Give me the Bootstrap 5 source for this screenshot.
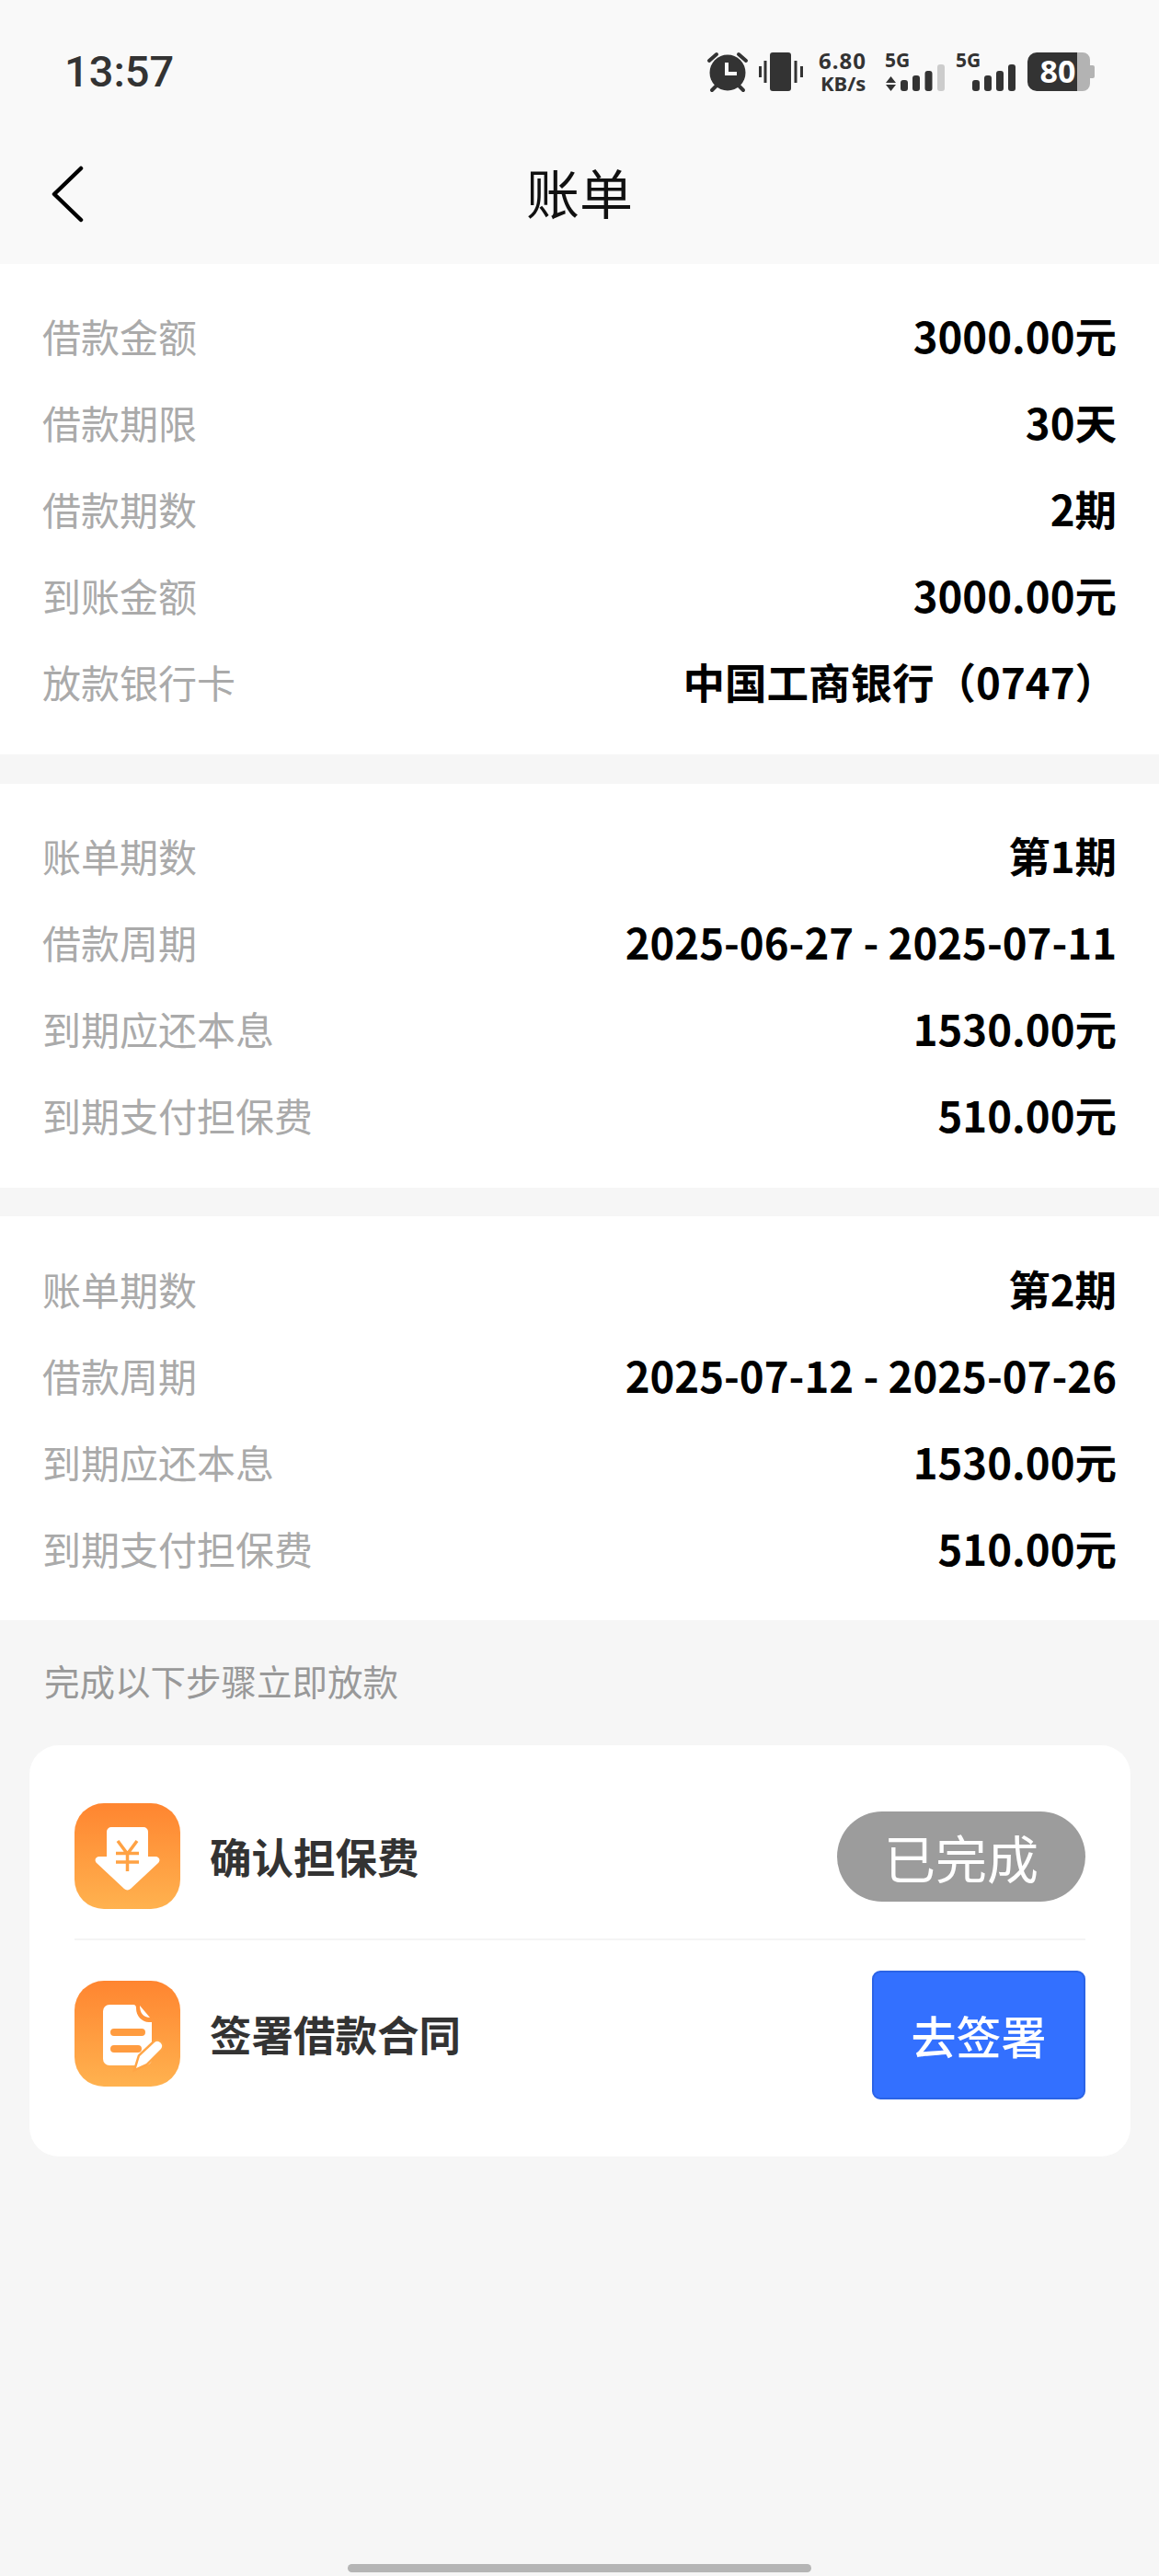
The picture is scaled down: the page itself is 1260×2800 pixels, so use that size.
<!DOCTYPE html>
<html lang="zh-CN">
<head>
    <meta charset="UTF-8">
    <meta name="viewport" content="width=device-width, initial-scale=1.0">
    <title>账单</title>
    <link rel="stylesheet" href="https://cdn.jsdelivr.net/npm/bootstrap@5.3.0/dist/css/bootstrap.min.css">
    <style>
        body {
            font-family: "Noto Sans CJK SC", "Noto Sans", sans-serif;
            background-color: #f6f6f6;
            min-height: 2800px;
            position: relative;
        }
        .top-area {
            background-color: #f9f9f9;
            height: 287px;
        }
        .status-bar {
            height: 150px;
            padding: 47px 60px 0 70px;
        }
        .clock {
            font-family: Roboto, "Noto Sans", sans-serif;
            font-size: 47px;
            font-weight: 500;
            line-height: 62px;
            color: #333;
        }
        .status-icons {
            margin-top: 3px;
        }
        .status-icons text {
            font-family: "Noto Sans", sans-serif;
            fill: #333;
            font-weight: 700;
        }
        .status-icons .net-top {
            font-size: 24px;
            letter-spacing: 1px;
        }
        .status-icons .net-low {
            font-size: 22px;
        }
        .status-icons .net-5g {
            font-size: 21px;
        }
        .status-icons .batt-num {
            font-size: 34px;
            fill: #fff;
        }
        .title-bar {
            height: 137px;
            padding: 0 55px;
        }
        .back-arrow {
            margin-bottom: 15px;
        }
        .page-title {
            font-size: 58px;
            line-height: 76px;
            color: #111;
            top: 20px;
            left: 0;
        }
        .bill-section {
            background-color: #fff;
            padding: 30px 46px 33px 46px;
            margin-bottom: 31px;
        }
        .bill-section.first-section {
            margin-bottom: 32px;
        }
        .bill-section.last-section {
            padding-top: 31px;
            padding-bottom: 32px;
            margin-bottom: 0;
        }
        .bill-row {
            height: 94px;
        }
        .bill-label {
            font-size: 42px;
            color: #aaa;
        }
        .bill-value {
            font-size: 45.500px;
            font-weight: 700;
            color: #000;
        }
        .steps-hint {
            font-size: 38.500px;
            line-height: 50px;
            color: #999;
            padding: 40px 0 0 48px;
        }
        .steps-card {
            background-color: #fff;
            border-radius: 32px;
            margin: 46px 31px 0 32px;
            height: 447px;
            padding: 63px 49px 0 49px;
        }
        .step-row {
            height: 115px;
        }
        .step-icon {
            width: 115px;
            height: 115px;
            border-radius: 32px;
            background: linear-gradient(180deg, #ff8530, #ffb24f);
        }
        .step-name {
            font-size: 45.500px;
            font-weight: 700;
            color: #333;
            margin-left: 32px;
        }
        .step-divider {
            height: 2px;
            background-color: #f4f4f4;
            margin: 32px 0 44px 0;
        }
        .done-pill {
            width: 270px;
            height: 98px;
            background-color: #9c9c9c;
            color: #fff;
            font-size: 56px;
            border-radius: 49px;
        }
        .sign-btn {
            width: 232px;
            height: 140px;
            background-color: #3370ff;
            border: 2px solid #2b63e6;
            color: #fff;
            font-size: 49px;
            font-weight: 500;
            border-radius: 9px;
            margin: -11px 0 -13px 0;
        }
        .sign-btn:hover {
            background-color: #3370ff;
            color: #fff;
        }
        .home-bar {
            width: 504px;
            height: 9px;
            background-color: #b5b5b5;
            border-radius: 5px;
            bottom: 4px;
            left: 378px;
        }
    </style>
</head>
<body>

    <div class="top-area">
        <!-- status bar -->
        <div class="status-bar d-flex justify-content-between align-items-start">
            <div class="clock">13:57</div>
            <svg class="status-icons" width="440" height="56" viewBox="760 50 440 56">
                <!-- alarm -->
                <circle cx="791" cy="79" r="19.500" fill="#333"/>
                <path d="M771 66l8-7M811 66l-8-7M774 98l5-5M808 98l-5-5" stroke="#333" stroke-width="4" stroke-linecap="round"/>
                <path d="M790 68v12h11" fill="none" stroke="#f9f9f9" stroke-width="4"/>
                <!-- vibrate -->
                <rect x="837" y="57" width="23" height="42" rx="3" fill="#333"/>
                <path d="M826.500 72v12M832 66v24M865 66v24M871.500 72v12" stroke="#333" stroke-width="3"/>
                <!-- speed -->
                <text x="890" y="75" class="net-top">6.80</text>
                <text x="892" y="99" class="net-low">KB/s</text>
                <!-- sim 1 -->
                <text x="962" y="73" class="net-5g">5G</text>
                <path d="M963 90l5.500-7 5.500 7zM963 92l5.500 7 5.500-7z" fill="#333"/>
                <rect x="979" y="87" width="8" height="12" rx="3" fill="#333"/>
                <rect x="992" y="82" width="8" height="17" rx="3" fill="#333"/>
                <rect x="1005.500" y="77" width="8" height="22" rx="3" fill="#333"/>
                <rect x="1019" y="70" width="8" height="29" rx="3" fill="#ccc"/>
                <!-- sim 2 -->
                <text x="1039" y="73" class="net-5g">5G</text>
                <rect x="1057" y="87" width="8" height="12" rx="3" fill="#333"/>
                <rect x="1070" y="82" width="8" height="17" rx="3" fill="#333"/>
                <rect x="1083" y="77" width="8" height="22" rx="3" fill="#333"/>
                <rect x="1096" y="70" width="8" height="29" rx="3" fill="#333"/>
                <!-- battery -->
                <path d="M1171 57h-44a10 10 0 0 0-10 10v22a10 10 0 0 0 10 10h44z" fill="#333"/>
                <path d="M1171 57h6a8 8 0 0 1 8 8v6h3a2 2 0 0 1 2 2v10a2 2 0 0 1-2 2h-3v6a8 8 0 0 1-8 8h-6z" fill="#b3b3b3"/>
                <text x="1150" y="90" class="batt-num" text-anchor="middle">80</text>
            </svg>
        </div>
        <!-- title -->
        <div class="title-bar position-relative d-flex align-items-center">
            <svg class="back-arrow" width="38" height="62" viewBox="0 0 38 62">
                <path d="M33 3L4 31l29 28" fill="none" stroke="#000" stroke-width="4.500" stroke-linecap="round" stroke-linejoin="round"/>
            </svg>
            <div class="page-title position-absolute w-100 text-center">账单</div>
        </div>
    </div>

    <div class="bill-section first-section">
        <div class="bill-row d-flex justify-content-between align-items-center">
            <span class="bill-label">借款金额</span><span class="bill-value">3000.00元</span>
        </div>
        <div class="bill-row d-flex justify-content-between align-items-center">
            <span class="bill-label">借款期限</span><span class="bill-value">30天</span>
        </div>
        <div class="bill-row d-flex justify-content-between align-items-center">
            <span class="bill-label">借款期数</span><span class="bill-value">2期</span>
        </div>
        <div class="bill-row d-flex justify-content-between align-items-center">
            <span class="bill-label">到账金额</span><span class="bill-value">3000.00元</span>
        </div>
        <div class="bill-row d-flex justify-content-between align-items-center">
            <span class="bill-label">放款银行卡</span><span class="bill-value">中国工商银行（0747）</span>
        </div>
    </div>

    <div class="bill-section">
        <div class="bill-row d-flex justify-content-between align-items-center">
            <span class="bill-label">账单期数</span><span class="bill-value">第1期</span>
        </div>
        <div class="bill-row d-flex justify-content-between align-items-center">
            <span class="bill-label">借款周期</span><span class="bill-value">2025-06-27 - 2025-07-11</span>
        </div>
        <div class="bill-row d-flex justify-content-between align-items-center">
            <span class="bill-label">到期应还本息</span><span class="bill-value">1530.00元</span>
        </div>
        <div class="bill-row d-flex justify-content-between align-items-center">
            <span class="bill-label">到期支付担保费</span><span class="bill-value">510.00元</span>
        </div>
    </div>

    <div class="bill-section last-section">
        <div class="bill-row d-flex justify-content-between align-items-center">
            <span class="bill-label">账单期数</span><span class="bill-value">第2期</span>
        </div>
        <div class="bill-row d-flex justify-content-between align-items-center">
            <span class="bill-label">借款周期</span><span class="bill-value">2025-07-12 - 2025-07-26</span>
        </div>
        <div class="bill-row d-flex justify-content-between align-items-center">
            <span class="bill-label">到期应还本息</span><span class="bill-value">1530.00元</span>
        </div>
        <div class="bill-row d-flex justify-content-between align-items-center">
            <span class="bill-label">到期支付担保费</span><span class="bill-value">510.00元</span>
        </div>
    </div>

    <div class="steps-hint">完成以下步骤立即放款</div>

    <div class="steps-card">
        <div class="step-row d-flex align-items-center">
            <div class="step-icon d-flex align-items-center justify-content-center">
                <svg width="115" height="115" viewBox="0 0 115 115">
                    <path d="M35 31a5 5 0 0 1 5-5h35a5 5 0 0 1 5 5v27h8c4 0 6 4 3 7L61 93a5 5 0 0 1-7 0L24 65c-3-3-1-7 3-7h8z" fill="#fff"/>
                    <path d="M47 41l10.500 14L68 41M45 54.500h25M45 64h25M57.500 55v19" fill="none" stroke="#ffa244" stroke-width="3.500"/>
                </svg>
            </div>
            <div class="step-name">确认担保费</div>
            <div class="done-pill d-flex align-items-center justify-content-center ms-auto">已完成</div>
        </div>
        <div class="step-divider"></div>
        <div class="step-row d-flex align-items-center">
            <div class="step-icon d-flex align-items-center justify-content-center">
                <svg width="115" height="115" viewBox="0 0 115 115">
                    <path d="M38 26h26c2 0 3 1 3 4 0 8 6 15 14 15h3v40a7 7 0 0 1-7 7H38a7 7 0 0 1-7-7V33a7 7 0 0 1 7-7z" fill="#fff"/>
                    <path d="M71 27l11 13c-7 0-11-5-11-13z" fill="#fff"/>
                    <path d="M43 56h30M43 74h26" stroke="#ff9c40" stroke-width="8" stroke-linecap="round"/>
                    <path d="M67 95l4-13 16-15a5 5 0 0 1 7 7L78 90z" fill="#fff" stroke="#ffa546" stroke-width="5" paint-order="stroke"/>
                </svg>
            </div>
            <div class="step-name">签署借款合同</div>
            <button type="button" class="btn sign-btn d-flex align-items-center justify-content-center ms-auto">去签署</button>
        </div>
    </div>

    <div class="home-bar position-absolute"></div>

</body>
</html>
